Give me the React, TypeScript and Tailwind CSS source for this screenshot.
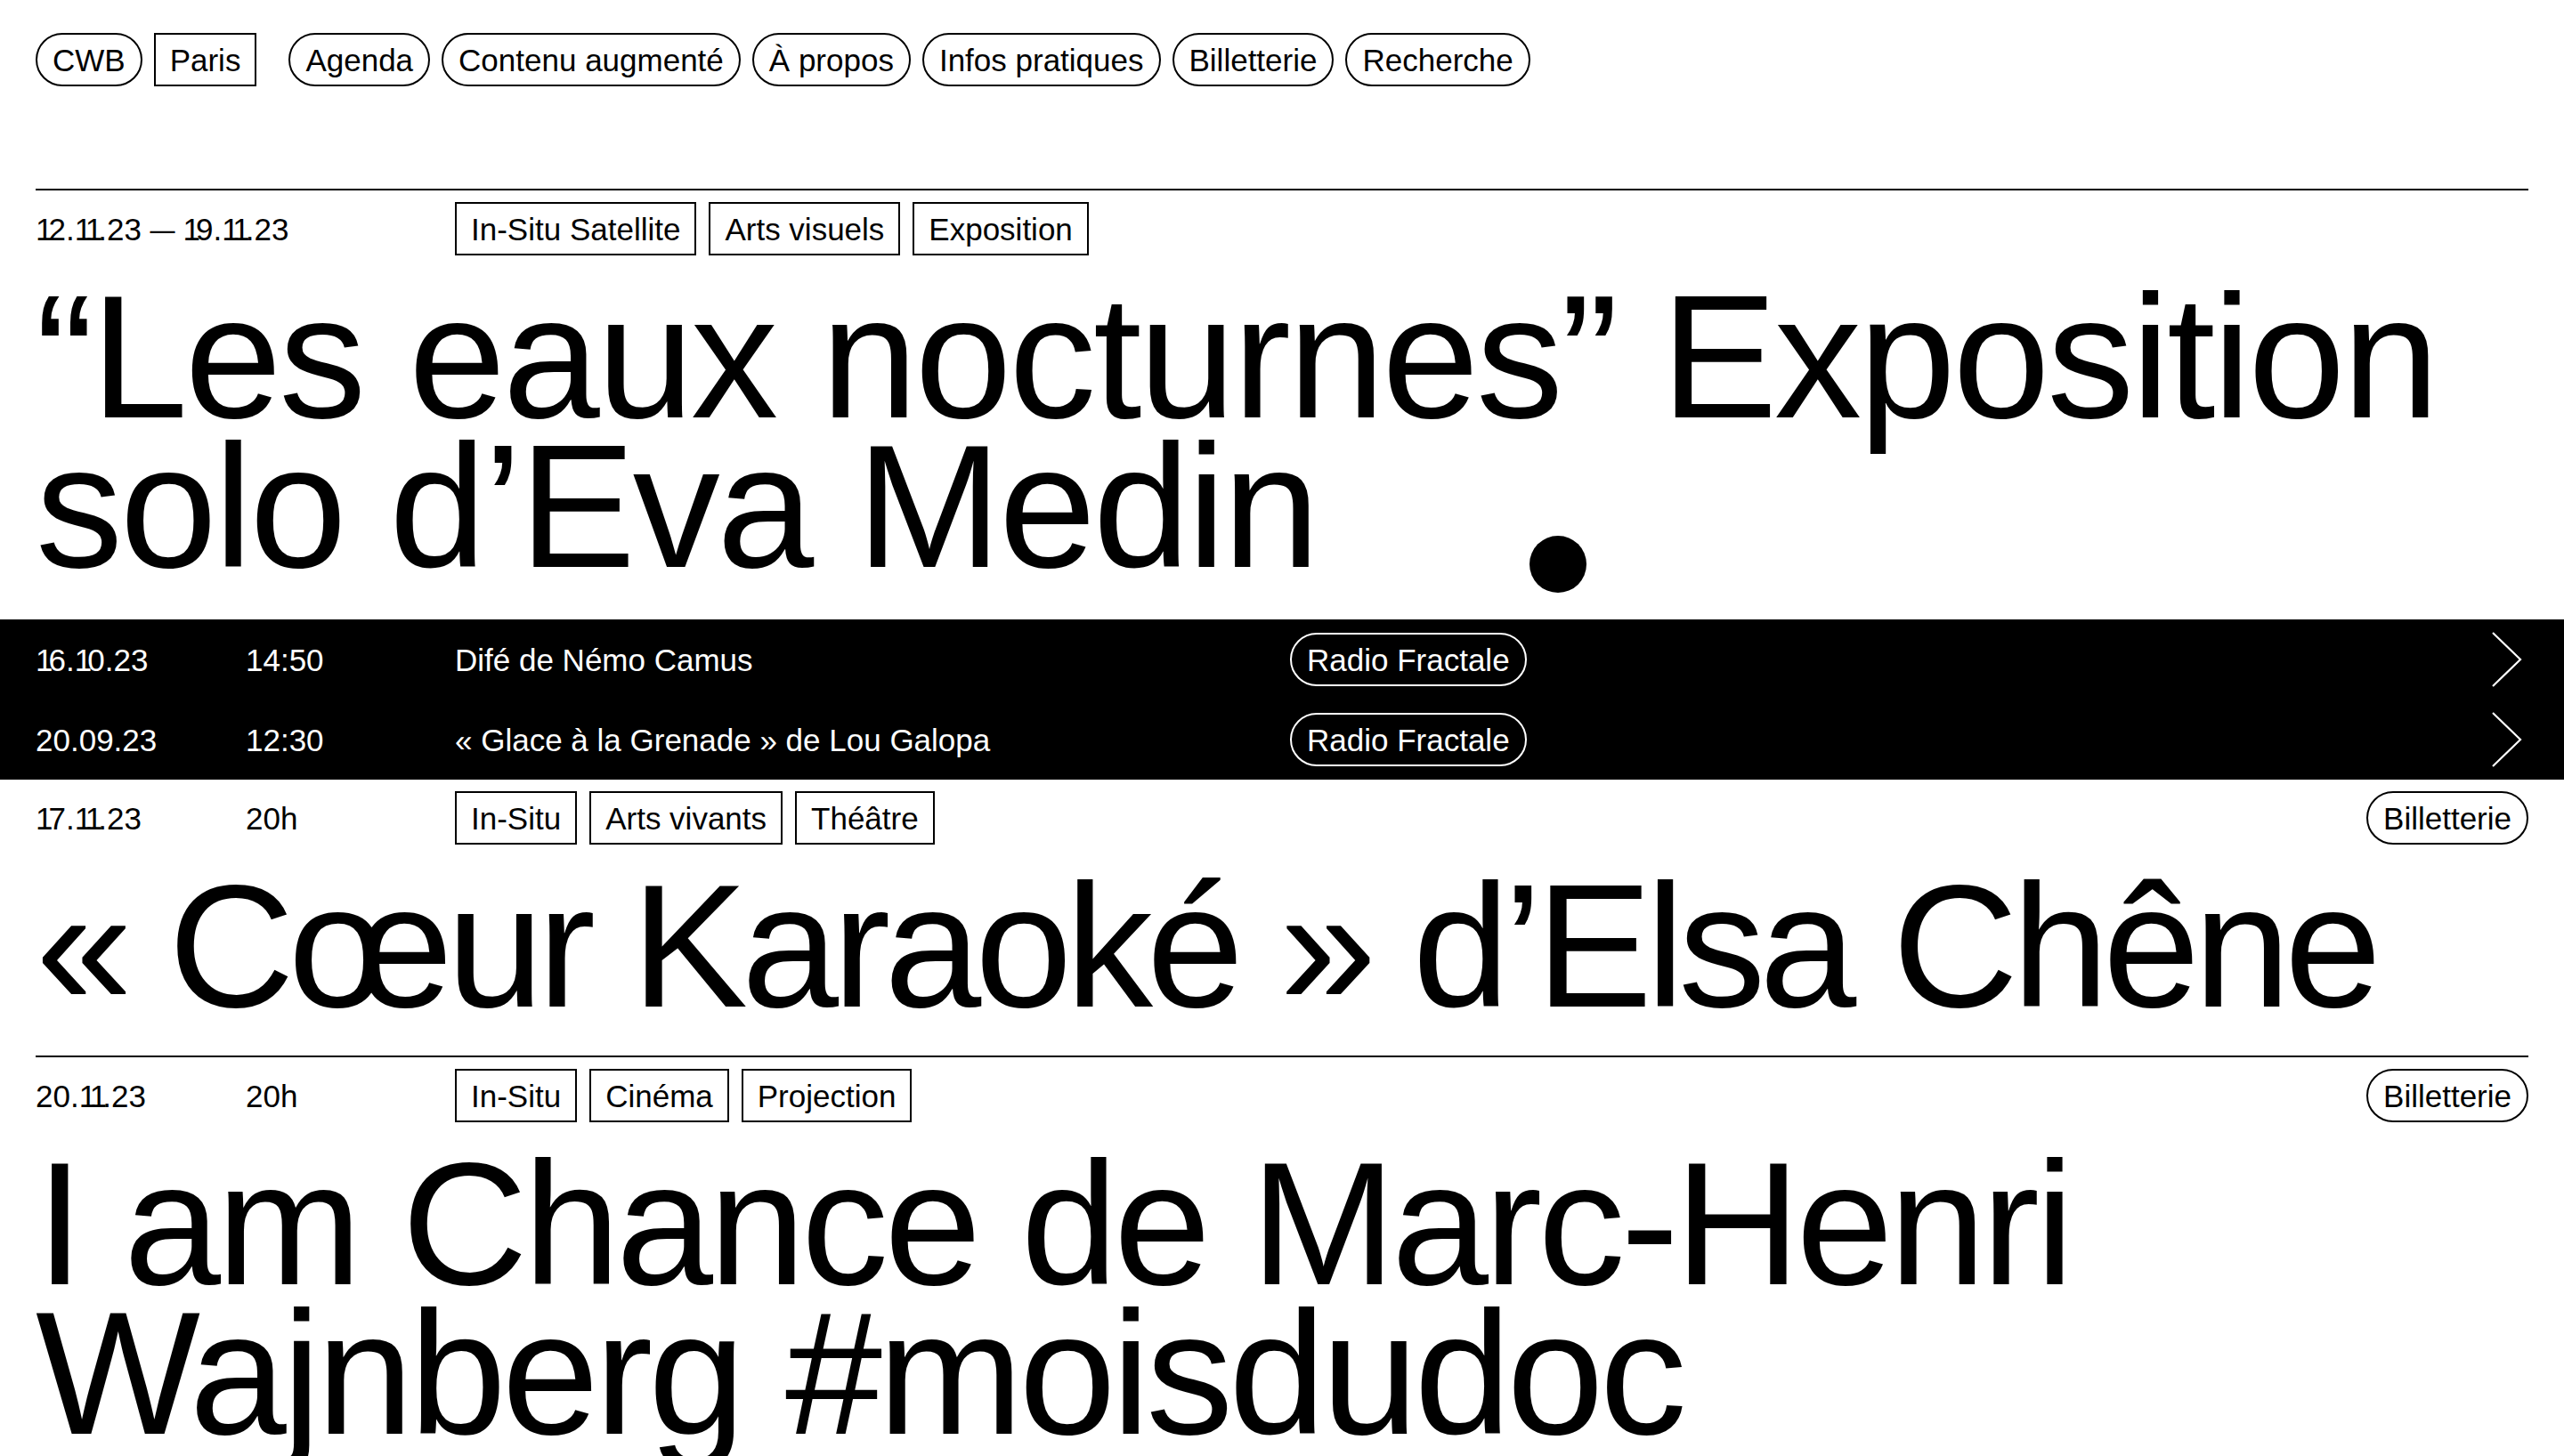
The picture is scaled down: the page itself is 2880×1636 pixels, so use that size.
import React from "react";

function Num({ t }: { t: string }) {
  return (
    <>
      {t.split("").map((c, i) =>
        c === "1" ? (
          <span key={i} className="tracking-[-0.14em]">
            1
          </span>
        ) : c === "—" ? (
          <span key={i} className="mx-[-4px] inline-block scale-x-[0.8]">
            {c}
          </span>
        ) : (
          <span key={i}>{c}</span>
        )
      )}
    </>
  );
}

function Pill({ children, light }: { children: React.ReactNode; light?: boolean }) {
  return (
    <span
      className={
        light
          ? "inline-flex h-[60px] items-center rounded-full border-2 border-white px-[17px] whitespace-nowrap"
          : "inline-flex h-[60px] items-center rounded-full border-2 border-black px-[17px] whitespace-nowrap"
      }
    >
      {children}
    </span>
  );
}

function Tag({ children }: { children: React.ReactNode }) {
  return (
    <span className="inline-flex h-[60px] items-center border-2 border-black px-[16px] whitespace-nowrap">
      {children}
    </span>
  );
}

function Chevron() {
  return (
    <svg width="46" height="62" viewBox="0 0 46 62" className="ml-auto mr-[-4px]">
      <polyline points="2,1 33,31 2,61" fill="none" stroke="white" strokeWidth="2.2" />
    </svg>
  );
}

function BandRow({ date, time, title }: { date: string; time: string; title: string }) {
  return (
    <div className="flex h-[90px] items-center px-[40px]">
      <div className="w-[236px]">
        <Num t={date} />
      </div>
      <div className="w-[235px]">{time}</div>
      <div className="w-[938px] whitespace-nowrap">{title}</div>
      <Pill light>Radio Fractale</Pill>
      <Chevron />
    </div>
  );
}

function Meta({
  date,
  time,
  tags,
  ticket,
}: {
  date: string;
  time?: string;
  tags: string[];
  ticket?: boolean;
}) {
  return (
    <div className="flex h-[60px] items-center">
      {time ? (
        <>
          <div className="w-[236px]">
            <Num t={date} />
          </div>
          <div className="w-[235px]">{time}</div>
        </>
      ) : (
        <div className="w-[471px] whitespace-nowrap">
          <Num t={date} />
        </div>
      )}
      <div className="flex gap-[14px]">
        {tags.map((t) => (
          <Tag key={t}>{t}</Tag>
        ))}
      </div>
      {ticket && (
        <div className="ml-auto">
          <Pill>Billetterie</Pill>
        </div>
      )}
    </div>
  );
}

export default function App() {
  return (
    <div className="min-h-screen overflow-hidden bg-white font-['Liberation_Sans',Arial,sans-serif] text-[35px] leading-none text-black">
      <nav className="flex items-center px-[40px] pt-[37px]">
        <Pill>CWB</Pill>
        <span className="ml-[13px] inline-flex h-[60px] items-center border-2 border-black px-[16px]">
          Paris
        </span>
        <div className="ml-[36px] flex gap-[13px]">
          <Pill>Agenda</Pill>
          <Pill>Contenu augmenté</Pill>
          <Pill>À propos</Pill>
          <Pill>Infos pratiques</Pill>
          <Pill>Billetterie</Pill>
          <Pill>Recherche</Pill>
        </div>
      </nav>

      <section className="relative mx-[40px] mt-[115px] border-t-2 border-black pt-[13px] pb-[42px]">
        <Meta date="12.11.23 — 19.11.23" tags={["In-Situ Satellite", "Arts visuels", "Exposition"]} />
        <h1 className="mt-[31px] text-[196px] leading-[168px] tracking-[-0.017em] font-normal">
          “Les eaux nocturnes” Exposition solo d’Eva Medin
        </h1>
        <div className="absolute left-[1678px] top-[388px] h-[64px] w-[64px] rounded-full bg-black" />
      </section>

      <div className="bg-black text-white">
        <BandRow date="16.10.23" time="14:50" title="Difé de Némo Camus" />
        <BandRow date="20.09.23" time="12:30" title="« Glace à la Grenade » de Lou Galopa" />
      </div>

      <section className="mx-[40px] pt-[13px] pb-[38px]">
        <Meta date="17.11.23" time="20h" tags={["In-Situ", "Arts vivants", "Théâtre"]} ticket />
        <h2 className="mt-[31px] text-[196px] leading-[168px] tracking-[-0.036em] font-normal whitespace-nowrap">
          « Cœur Karaoké » d’Elsa Chêne
        </h2>
      </section>

      <section className="mx-[40px] border-t-2 border-black pt-[13px]">
        <Meta date="20.11.23" time="20h" tags={["In-Situ", "Cinéma", "Projection"]} ticket />
        <h2 className="mt-[31px] text-[196px] leading-[168px] tracking-[-0.025em] font-normal">
          I am Chance de Marc-Henri Wajnberg #moisdudoc
        </h2>
      </section>
    </div>
  );
}
